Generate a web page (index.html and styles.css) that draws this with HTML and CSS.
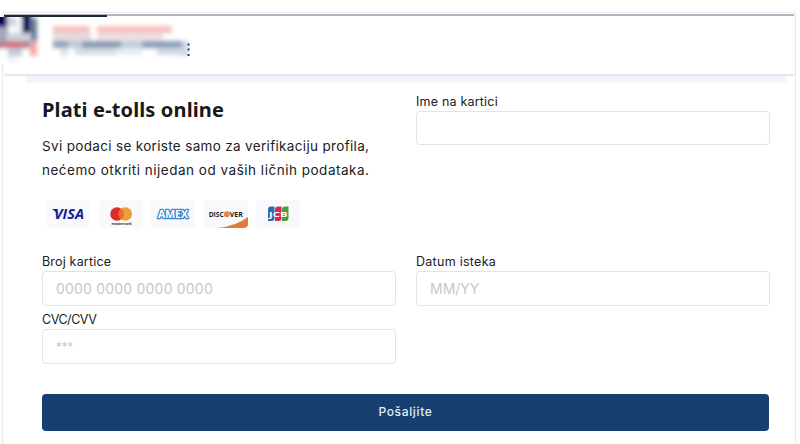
FILE: index.html
```html
<!DOCTYPE html>
<html lang="sr">
<head>
  <meta charset="utf-8">
  <title>Plati e-tolls online</title>
  <link rel="stylesheet" href="styles.css">
</head>
<body>
  <div class="frame">
    <header class="header">
      <div class="progress"></div>
      <svg class="logo" width="192" height="47" viewBox="0 16 192 47">
        <defs>
          <filter id="soft" x="-10%" y="-10%" width="120%" height="120%"><feGaussianBlur stdDeviation="2"/></filter>
        </defs>
        <rect x="0" y="18" width="52" height="45" fill="#fff"/>
        <g filter="url(#soft)">
          <rect x="-5" y="12" width="12" height="14" fill="#00005c"/>
          <rect x="7" y="17" width="8" height="8" fill="#c9cddc"/>
          <rect x="15" y="17" width="8" height="15" fill="#f0f1f6"/>
          <rect x="22" y="12" width="9" height="20" fill="#00005c"/>
          <rect x="30" y="17" width="7" height="24" fill="#697b99"/>
          <rect x="-5" y="26" width="13" height="14" fill="#a3a9be"/>
          <rect x="7" y="32" width="24" height="8" fill="#cdd2df"/>
          <rect x="-5" y="40" width="13" height="7" fill="#b8808f"/>
          <rect x="7" y="40" width="16" height="7" fill="#d4717c"/>
          <rect x="23" y="40" width="7" height="7" fill="#a98296"/>
          <rect x="30" y="40" width="7" height="15" fill="#f2aaa7"/>
          <rect x="8" y="47" width="14" height="8" fill="#c3c9d9"/>
          <rect x="8" y="55" width="8" height="6" fill="#eef0f5"/>
          <rect x="53" y="25" width="37" height="7" fill="#f6c1bd"/>
          <rect x="97" y="25" width="75" height="7" fill="#f6c1bd"/>
          <rect x="53" y="32" width="38" height="8" fill="#e2dce1"/>
          <rect x="97" y="32" width="66" height="8" fill="#eee0e3"/>
          <rect x="53" y="40" width="15" height="7" fill="#8fa3b9"/>
          <rect x="68" y="40" width="14" height="7" fill="#becbd8"/>
          <rect x="82" y="40" width="39" height="7" fill="#859ab3"/>
          <rect x="121" y="40" width="21" height="7" fill="#c0cddb"/>
          <rect x="142" y="40" width="40" height="7" fill="#8b9fb8"/>
          <rect x="182" y="40" width="6" height="15" fill="#cbd5e2"/>
          <rect x="60" y="47" width="8" height="8" fill="#dfe4ec"/>
          <rect x="75" y="47" width="40" height="7" fill="#d6dde7"/>
          <rect x="115" y="47" width="28" height="7" fill="#e8ecf2"/>
          <rect x="157" y="47" width="28" height="7" fill="#d2d9e5"/>
        </g>
        <path d="M187.500 42.500h2v2h-2zM187.500 47.500h2v2h-2zM187.500 53h2v2h-2z" fill="#174071"/>
      </svg>
    </header>
    <div class="band"></div>

    <form class="form" onsubmit="return false">
      <div class="intro">
        <h1>Plati e-tolls online</h1>
        <p><span class="line-one">Svi podaci se koriste samo za verifikaciju profila,</span><br><span class="line-two">nećemo otkriti nijedan od vaših ličnih podataka.</span></p>
        <div class="cards">
          <svg class="card" viewBox="0 0 44 28">
            <path d="M6 9h5l1.500 5z" fill="#10239b"/>
            <text x="8" y="19" textLength="30" lengthAdjust="spacingAndGlyphs" font-size="14.500" font-weight="bold" font-style="italic" fill="#10239b">VISA</text>
          </svg>
          <svg class="card" viewBox="0 0 44 28">
            <circle cx="18" cy="14" r="6.8" fill="#d92f2b"/>
            <circle cx="26.3" cy="14" r="6.8" fill="#eba03d"/>
            <path d="M22.2 8.6a6.8 6.8 0 0 1 0 10.8a6.8 6.8 0 0 1 0-10.8z" fill="#ee672b"/>
            <text x="12.500" y="24.500" textLength="20" lengthAdjust="spacingAndGlyphs" font-size="4" font-weight="bold" fill="#333">mastercard</text>
          </svg>
          <svg class="card" viewBox="0 0 44 28">
            <text x="7" y="18" textLength="30" lengthAdjust="spacingAndGlyphs" font-size="11" font-weight="bold" fill="#fff" stroke="#3d88c7" stroke-width="2.600" stroke-linejoin="round" paint-order="stroke">AMEX</text>
          </svg>
          <svg class="card" viewBox="0 0 44 28">
            <path d="M14 28Q32 26 44 17V25a3 3 0 0 1-3 3z" fill="#e07c37"/>
            <text x="4.700" y="17" textLength="15" lengthAdjust="spacingAndGlyphs" font-size="7.500" font-weight="bold" fill="#222">DISC</text>
            <circle cx="22.8" cy="14.3" r="3" fill="#e8843b"/>
            <text x="25.800" y="17" textLength="13" lengthAdjust="spacingAndGlyphs" font-size="7.500" font-weight="bold" fill="#222">VER</text>
          </svg>
          <svg class="card" viewBox="0 0 44 28">
            <path d="M15 6.500h3.500V18q0 3-3 3H12V9.500q0-3 3-3z" fill="#2c6cb3"/>
            <path d="M22 6.500h3.500V18q0 3-3 3H19V9.500q0-3 3-3z" fill="#df2843"/>
            <path d="M29 6.500h3.500V18q0 3-3 3H26V9.500q0-3 3-3z" fill="#4a9c42"/>
            <text x="13" y="16.500" textLength="18.500" lengthAdjust="spacingAndGlyphs" font-size="7.500" font-weight="bold" fill="#fff">JCB</text>
          </svg>
        </div>
      </div>

      <div class="field">
        <label for="name" class="label-name">Ime na kartici</label>
        <input id="name" class="name" type="text">
      </div>
      <div class="field">
        <label for="number" class="label-number">Broj kartice</label>
        <input id="number" class="number" type="text" placeholder="0000 0000 0000 0000">
      </div>
      <div class="field">
        <label for="expiry" class="label-date">Datum isteka</label>
        <input id="expiry" type="text" placeholder="MM/YY">
      </div>
      <div class="field">
        <label for="cvc" class="label-cvc">CVC/CVV</label>
        <input id="cvc" class="cvc" type="text" placeholder="***">
      </div>
      <button class="submit" type="button">Pošaljite</button>
    </form>
  </div>
</body>
</html>
```

FILE: styles.css
```css
* {
  box-sizing: border-box;
}

body {
  margin: 0;
  padding: 12px 4px 0 2px;
  height: 444px;
  overflow: hidden;
  background: #fff;
  color: #202124;
  font-family: Inter, "Open Sans", sans-serif;
}

.frame {
  height: 440px;
  border: 1px solid #ecebe3;
  border-top-left-radius: 3px;
  padding: 1px 1px 0;
}

.header {
  position: relative;
  height: 61px;
  border-top: 2px solid #acb6c8;
  border-bottom: 1px solid #dce3ea;
  box-shadow: 0 1px 2px #e3e9ef;
}

/* sits on top of the header line */
.progress {
  position: absolute;
  top: -1px;
  left: 0;
  width: 103px;
  height: 2px;
  background: #1f2830;
}

.logo {
  position: absolute;
  top: 1px;
  left: -4px;
}

.band {
  height: 8px;
  margin: 0 7px 0 22px;
  background: #f4f6f9;
}

.form {
  display: grid;
  grid-template-columns: 354px 354px;
  column-gap: 20px;
  padding: 11px 0 0 38px;
}

.intro {
  height: 160px;
}

h1 {
  margin: 2px 0 0;
  font: bold 20px/28px "Noto Sans", sans-serif;
  letter-spacing: 0.14px;
  color: #17181a;
  white-space: nowrap;
}

p {
  margin: 10px 0 0;
  font-size: 13.5px;
  line-height: 24px;
  white-space: nowrap;
}

.line-one {
  letter-spacing: 0.33px;
}

.line-two {
  letter-spacing: 0.51px;
}

.cards {
  display: flex;
  gap: 8.5px;
  margin: 18px 0 0 4px;
}

.card {
  width: 44px;
  height: 28px;
  border-radius: 4px;
  background: #f7f9fc;
  font-family: "Open Sans", sans-serif;
}

.field {
  display: flex;
  flex-direction: column;
  height: 58px;
}

label {
  height: 17px;
  font-size: 12.5px;
  line-height: 16px;
  white-space: nowrap;
}

.label-name {
  letter-spacing: 0.2px;
}

.label-number {
  letter-spacing: 0.18px;
}

.label-date {
  letter-spacing: 0.28px;
}

.label-cvc {
  letter-spacing: -0.45px;
}

input {
  width: 354px;
  height: 35px;
  padding: 0 13px;
  border: 1px solid #e2e3e4;
  border-radius: 4px;
  background: #fff;
  font-family: inherit;
  font-size: 14px;
}

.name {
  height: 34px;
}

.number {
  letter-spacing: 0.2px;
}

.cvc {
  font-size: 11.5px;
}

input::placeholder {
  color: #c6c7c9;
}

.submit {
  grid-column: 1 / 3;
  width: 727px;
  height: 37px;
  margin-top: 24px;
  padding: 0 0 2px;
  border: 0;
  border-radius: 4px;
  background: #174071;
  color: #e4ecf5;
  font: 500 12px/35px Inter, sans-serif;
  letter-spacing: 0.65px;
}
```
